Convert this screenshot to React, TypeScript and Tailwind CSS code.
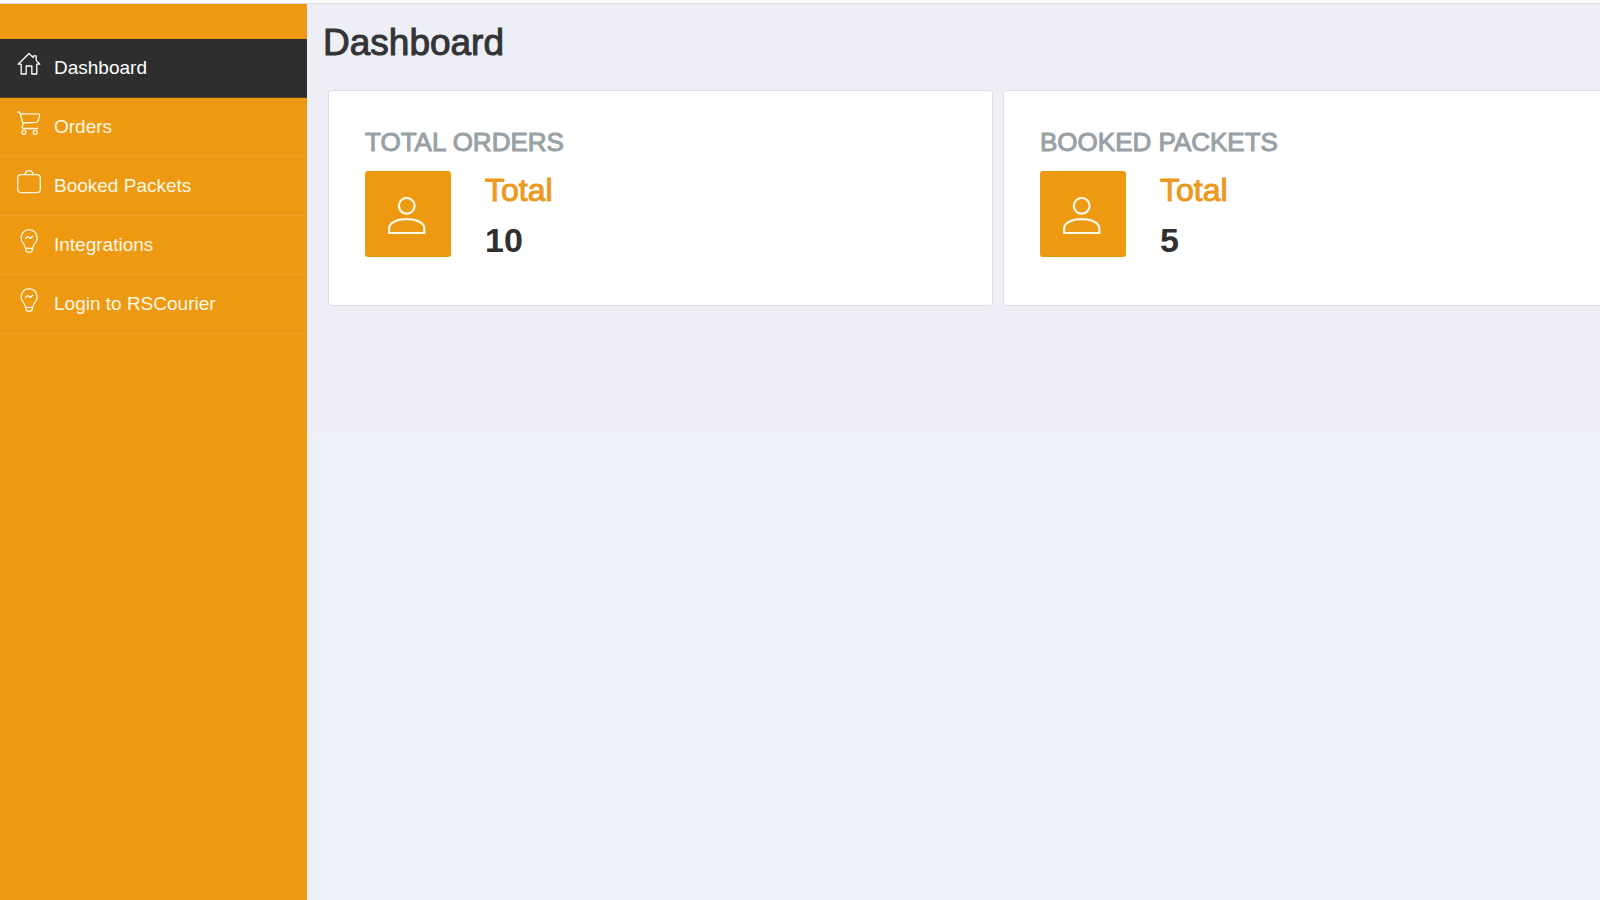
import type { ReactNode } from "react";

function Icon({ children }: { children: ReactNode }) {
  return (
    <svg
      viewBox="0 0 24 24"
      className="size-6 shrink-0"
      fill="none"
      stroke="currentColor"
      strokeWidth="1.3"
      strokeLinecap="round"
      strokeLinejoin="round"
      aria-hidden="true"
    >
      {children}
    </svg>
  );
}

const homeIcon = (
  <Icon>
    <path d="M4.2 12.2H1.200L12 1.500l4.2 4.100V3.900h3v4.500l3.600 3.800H19.800V22h-5v-8H9.200v8h-5z" />
  </Icon>
);

const cartIcon = (
  <Icon>
    <path d="M.7 1h1.100c.7 0 1 .3 1.200.9L5.900 12c.6 2-.8 2.600-.8 4 0 1 .6 1.500 1.600 1.500h14" />
    <path d="M3.300 2.900h18.200c.9 0 1.300.6 1.100 1.400l-1.300 5c-.3 1.200-1.100 2-2.400 2.100L5.900 12" />
    <circle cx="6.900" cy="21.400" r="2" />
    <circle cx="18.200" cy="21.400" r="2" />
  </Icon>
);

const bagIcon = (
  <Icon>
    <rect x=".7" y="4.600" width="22.600" height="18" rx="3.400" />
    <path d="M8.200 4.600C8.200 2.300 9.700.7 12 .7s3.800 1.600 3.800 3.900" />
  </Icon>
);

const bulbIcon = (
  <Icon>
    <path d="M8.300 19.300c0-2.500-.7-3.600-2-4.900C4.900 13 4.100 11 4.100 8.900 4.100 4.200 7.600.7 12.100.7s8 3.500 8 8.200c0 2.100-.8 4.100-2.200 5.500-1.300 1.300-2 2.400-2 4.900z" />
    <path d="M8.900 19.300v1.600c0 1.400 1 2.400 3.200 2.400s3.200-1 3.200-2.400v-1.600" />
    <path d="M8.400 9.500l2.400-2.100 2.500 2 2.500-2.100" />
  </Icon>
);

const menu = [
  { label: "Dashboard", icon: homeIcon, active: true },
  { label: "Orders", icon: cartIcon, active: false },
  { label: "Booked Packets", icon: bagIcon, active: false },
  { label: "Integrations", icon: bulbIcon, active: false },
  { label: "Login to RSCourier", icon: bulbIcon, active: false },
];

function StatCard({ title, value }: { title: string; value: number }) {
  return (
    <section className="shrink-0 basis-[665px] rounded-[3px] border border-[#dcdfe3] bg-white px-9 pt-8 pb-12">
      <h2 className="text-[26px] leading-[38px] text-[#98a1a6] uppercase [-webkit-text-stroke:1px_#98a1a6]">
        {title}
      </h2>
      <div className="mt-[10px] flex gap-[34px]">
        <div className="flex size-[86px] items-center justify-center rounded-[3px] bg-[#ee9912] text-[#fff8e6]">
          <svg
            viewBox="0 0 40 40"
            className="size-10"
            fill="none"
            stroke="currentColor"
            strokeWidth="2.200"
            aria-hidden="true"
          >
            <circle cx="18.700" cy="11.800" r="7.900" />
            <path d="M1.100 39v-4.500c0-5.500 7.400-9.300 17.600-9.300s17.600 3.800 17.600 9.300V39z" />
          </svg>
        </div>
        <div className="-mb-1">
          <p className="text-[32px] leading-[38px] text-[#e99a1f] [-webkit-text-stroke:1px_#e99a1f]">
            Total
          </p>
          <p className="mt-3 text-[34px] leading-[38px] font-bold text-[#2f2f2f]">{value}</p>
        </div>
      </div>
    </section>
  );
}

export default function App() {
  return (
    <div className="flex min-h-screen flex-col overflow-hidden bg-white font-['Liberation_Sans',Arial,sans-serif]">
      <header className="h-1 border-b border-[#dcdee2] bg-white" />
      <div className="flex grow">
        <aside className="w-[307px] shrink-0 bg-[#ee9912] pt-[35px]">
          <nav>
            <ul>
              {menu.map((item) => (
                <li key={item.label}>
                  <a
                    href="#"
                    aria-current={item.active ? "page" : undefined}
                    className={
                      item.active
                        ? "flex h-[59px] gap-[13px] border-b border-[#5d431c] bg-[#2e2e2e] pt-[13px] pl-[17px] text-white"
                        : "flex h-[59px] gap-[13px] border-b border-[#f0a22d] pt-[13px] pl-[17px] text-[#fff8e6]"
                    }
                  >
                    {item.icon}
                    <span className="pt-1 text-[19px] leading-6">{item.label}</span>
                  </a>
                </li>
              ))}
            </ul>
          </nav>
        </aside>
        <main className="min-w-0 grow overflow-hidden bg-linear-to-b from-[#eeeff6] from-48% to-[#ecf0f9] to-49%">
          <h1 className="px-4 pt-[18px] text-[37px] leading-[42px] text-[#333436] [-webkit-text-stroke:1px_#333436]">
            Dashboard
          </h1>
          <div className="flex gap-[10px] pt-[26px] pl-[21px]">
            <StatCard title="Total Orders" value={10} />
            <StatCard title="Booked Packets" value={5} />
          </div>
        </main>
      </div>
    </div>
  );
}
